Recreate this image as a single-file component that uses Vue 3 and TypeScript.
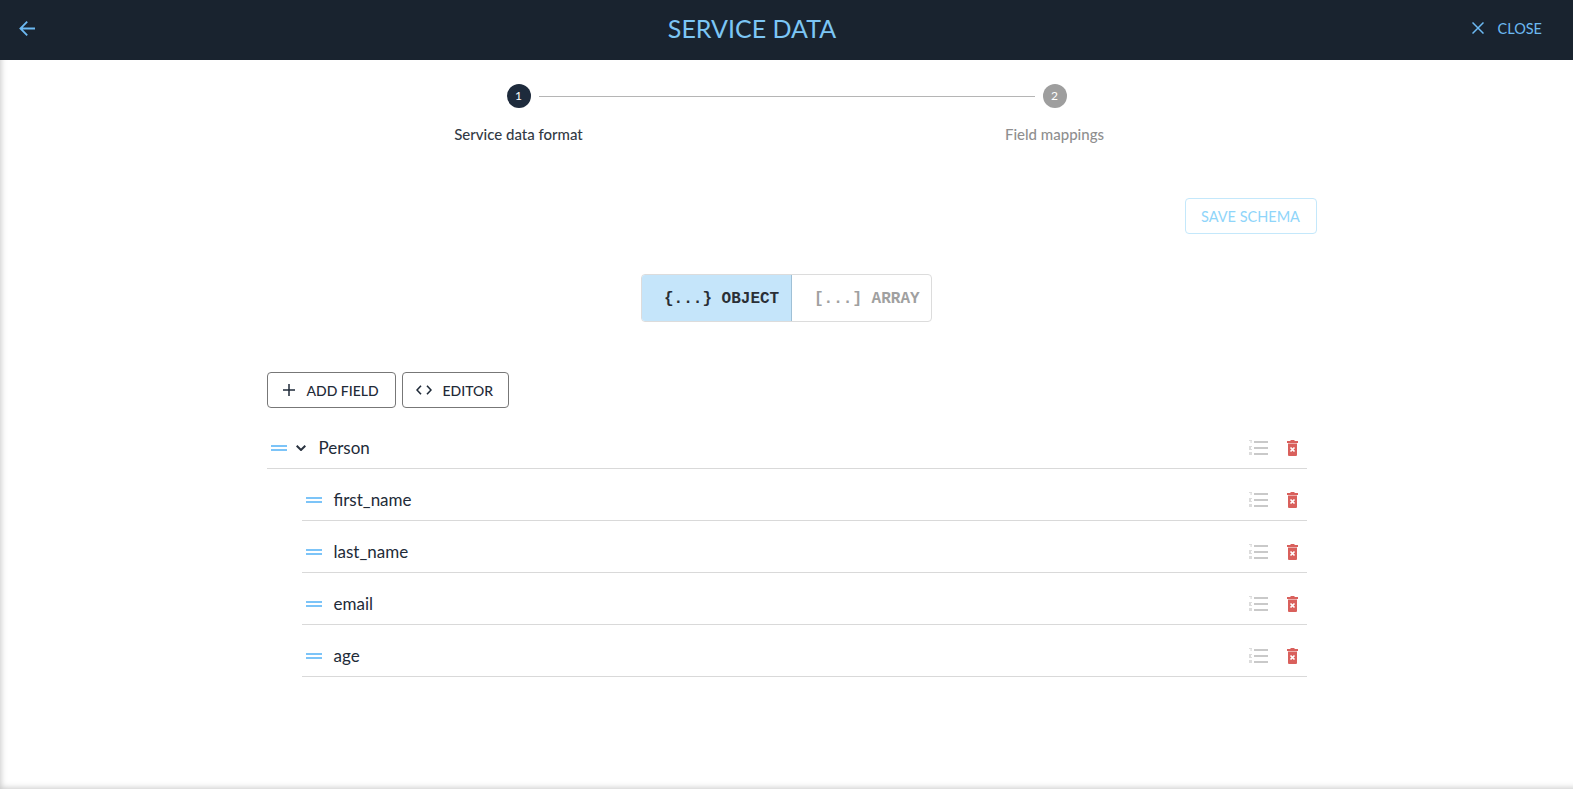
<template>
  <div class="page">
    <header class="top-bar">
      <button class="back-btn" aria-label="Back">
        <svg width="16" height="15" viewBox="0 0 16 15" fill="none" stroke="currentColor" stroke-width="1.8">
          <path d="M16 7.5H1.6M8.2.7 1.4 7.5l6.8 6.8" />
        </svg>
      </button>
      <h1 class="title">SERVICE DATA</h1>
      <button class="close-btn">
        <svg width="12" height="12" viewBox="0 0 12 12" fill="none" stroke="currentColor" stroke-width="1.5">
          <path d="M.5.5l11 11M11.5.5l-11 11" />
        </svg>
        <span>CLOSE</span>
      </button>
    </header>

    <main class="content">
      <div class="stepper">
        <div v-for="(step, i) in steps" :key="step" class="step" :class="{ active: i === 0 }">
          <div class="step-head">
            <span class="step-num">{{ i + 1 }}</span>
            <span v-if="i === 0" class="step-line"></span>
          </div>
          <div class="step-label">{{ step }}</div>
        </div>
      </div>

      <div class="save-row">
        <button class="save-btn">SAVE SCHEMA</button>
      </div>

      <div class="toggle-row">
        <div class="toggle">
          <div class="toggle-item selected">{...} OBJECT</div>
          <div class="toggle-item">[...] ARRAY</div>
        </div>
      </div>

      <div class="tree">
        <div class="actions">
          <button class="outline-btn">
            <svg width="12" height="12" viewBox="0 0 12 12" fill="none" stroke="currentColor" stroke-width="1.5">
              <path d="M6 0v12M0 6h12" />
            </svg>
            <span>ADD FIELD</span>
          </button>
          <button class="outline-btn editor">
            <svg width="16" height="10" viewBox="0 0 16 10" fill="none" stroke="currentColor" stroke-width="1.6">
              <path d="M5 .8 1 5l4 4.2M11 .8 15 5l-4 4.2" />
            </svg>
            <span>EDITOR</span>
          </button>
        </div>

        <div v-for="field in fields" :key="field.name" class="field" :class="field.root ? 'root' : 'child'">
          <span class="drag"></span>
          <svg v-if="field.root" class="chevron" width="10" height="6" viewBox="0 0 10 6" fill="none" stroke="currentColor" stroke-width="2">
            <path d="M.7.7 5 5 9.3.7" />
          </svg>
          <span class="field-name">{{ field.name }}</span>
          <svg class="list-icon" width="19" height="15" viewBox="0 0 19 15">
            <g fill="#dcdcdc">
              <rect x="0" y="0" width="3" height="1" />
              <rect x="1.5" y="0" width="1.2" height="3" />
              <rect x="0" y="6" width="3" height="1" />
              <rect x="0" y="7" width="2" height="2" />
              <rect x="0" y="9" width="3" height="1" />
              <rect x="0" y="12" width="3" height="3" />
            </g>
            <g fill="#c9c9c9">
              <rect x="5" y="1" width="14" height="2" />
              <rect x="5" y="7" width="14" height="2" />
              <rect x="5" y="13" width="14" height="2" />
            </g>
          </svg>
          <svg class="trash-icon" width="11" height="16" viewBox="0 0 11 16">
            <path fill="#d9605c" d="M3.5 0h4v1h3.5v2H0V1h3.5zM1 3.6h9V15a1 1 0 0 1-1 1H2a1 1 0 0 1-1-1z" />
            <path stroke="#fff" stroke-width="1.7" d="M3.5 7.5l4 4M7.5 7.5l-4 4" />
          </svg>
        </div>
      </div>
    </main>
  </div>
</template>

<script setup lang="ts">
interface Field {
  name: string
  root?: boolean
}

const steps = ['Service data format', 'Field mappings']

const fields: Field[] = [
  { name: 'Person', root: true },
  { name: 'first_name' },
  { name: 'last_name' },
  { name: 'email' },
  { name: 'age' },
]
</script>

<style>
html,
body {
  margin: 0;
  background: #fff;
}
</style>

<style scoped>
.page {
  height: 789px;
  display: flex;
  flex-direction: column;
  overflow: hidden;
  font-family: 'Lato', 'Noto Sans', sans-serif;
  color: #222b38;
}

button {
  font-family: inherit;
  background: none;
  cursor: pointer;
}

.top-bar {
  height: 60px;
  flex: none;
  display: flex;
  align-items: center;
  justify-content: space-between;
  background: #19232f;
  color: #6cb9f2;
}

.back-btn {
  width: 56px;
  height: 56px;
  margin-bottom: 4px;
  padding: 0 0 0 19px;
  border: 0;
  color: inherit;
  display: flex;
  align-items: center;
}

.title {
  margin: 0 0 4px;
  font-size: 25px;
  font-weight: 400;
  color: #7cc6f5;
}

.close-btn {
  width: 125px;
  height: 56px;
  margin-bottom: 4px;
  padding: 0 31px 0 0;
  border: 0;
  color: inherit;
  display: flex;
  align-items: center;
  justify-content: flex-end;
  gap: 13px;
  font-size: 14.5px;
}

.content {
  flex: 1;
  box-shadow: inset 5px -5px 6px -4px rgba(0, 0, 0, 0.22);
}

.stepper {
  width: 1072px;
  margin: 0 auto;
  padding-top: 24px;
  display: flex;
}

.step {
  flex: 1;
  color: #8f8f8f;
}

.step.active {
  color: #333a45;
}

.step-head {
  position: relative;
  height: 24px;
  display: flex;
  justify-content: center;
}

.step-num {
  width: 24px;
  height: 24px;
  border-radius: 50%;
  background: #9e9e9e;
  color: #fff;
  font-size: 12px;
  line-height: 24px;
  text-align: center;
}

.active .step-num {
  background: #1e2b3c;
}

.step-line {
  position: absolute;
  top: 11.5px;
  left: calc(50% + 20px);
  width: 496px;
  height: 1px;
  background: #b5b5b5;
}

.step-label {
  margin-top: 16px;
  font-size: 15px;
  line-height: 20px;
  text-align: center;
  font-weight: 500;
}

.save-row {
  width: 1060px;
  margin: 54px auto 0;
  display: flex;
  justify-content: flex-end;
}

.save-btn {
  width: 132px;
  height: 36px;
  border: 1px solid #c4e8fb;
  border-radius: 4px;
  color: #8fd5fa;
  font-size: 14.5px;
}

.toggle-row {
  margin-top: 40px;
  display: flex;
  justify-content: center;
}

.toggle {
  display: flex;
  height: 48px;
  border: 1px solid #dcdcdc;
  border-radius: 4px;
  font-family: 'Liberation Mono', monospace;
  font-size: 16px;
  font-weight: 700;
  color: #a0a0a0;
  box-sizing: border-box;
  overflow: hidden;
}

.toggle-item {
  box-sizing: border-box;
  width: 139px;
  padding-left: 22px;
  line-height: 48px;
  white-space: pre;
}

.toggle-item.selected {
  width: 150px;
  background: #c5e5fa;
  border-right: 1px solid #9fc0d6;
  color: #2a2f36;
}

.tree {
  width: 1040px;
  margin: 50px auto 0;
}

.actions {
  display: flex;
  gap: 6px;
  margin-bottom: 9px;
}

.outline-btn {
  box-sizing: border-box;
  width: 129px;
  height: 36px;
  padding: 0 0 0 15px;
  border: 1px solid #777;
  border-radius: 4px;
  color: #1f2a38;
  font-size: 14px;
  font-weight: 500;
  display: flex;
  align-items: center;
  gap: 12px;
}

.outline-btn.editor {
  width: 107px;
  padding-left: 13px;
  gap: 11px;
}

.field {
  box-sizing: border-box;
  height: 52px;
  padding: 9px 9px 0 0;
  border-bottom: 1px solid #d9d9d9;
  display: flex;
  align-items: center;
  font-size: 17px;
  color: #222b38;
}

.field.child {
  margin-left: 35px;
}

.drag {
  box-sizing: border-box;
  width: 16px;
  height: 6px;
  margin: 1px 0 0 4px;
  border-top: 2px solid #7cc4f8;
  border-bottom: 2px solid #7cc4f8;
}

.chevron {
  margin: 1px 0 0 9px;
  color: #2a3340;
}

.field-name {
  flex: 1;
  margin-left: 12px;
}

.root .field-name {
  margin-left: 13px;
}

.list-icon {
  margin-top: 1px;
}

.trash-icon {
  margin: 1px 0 0 19px;
}
</style>
